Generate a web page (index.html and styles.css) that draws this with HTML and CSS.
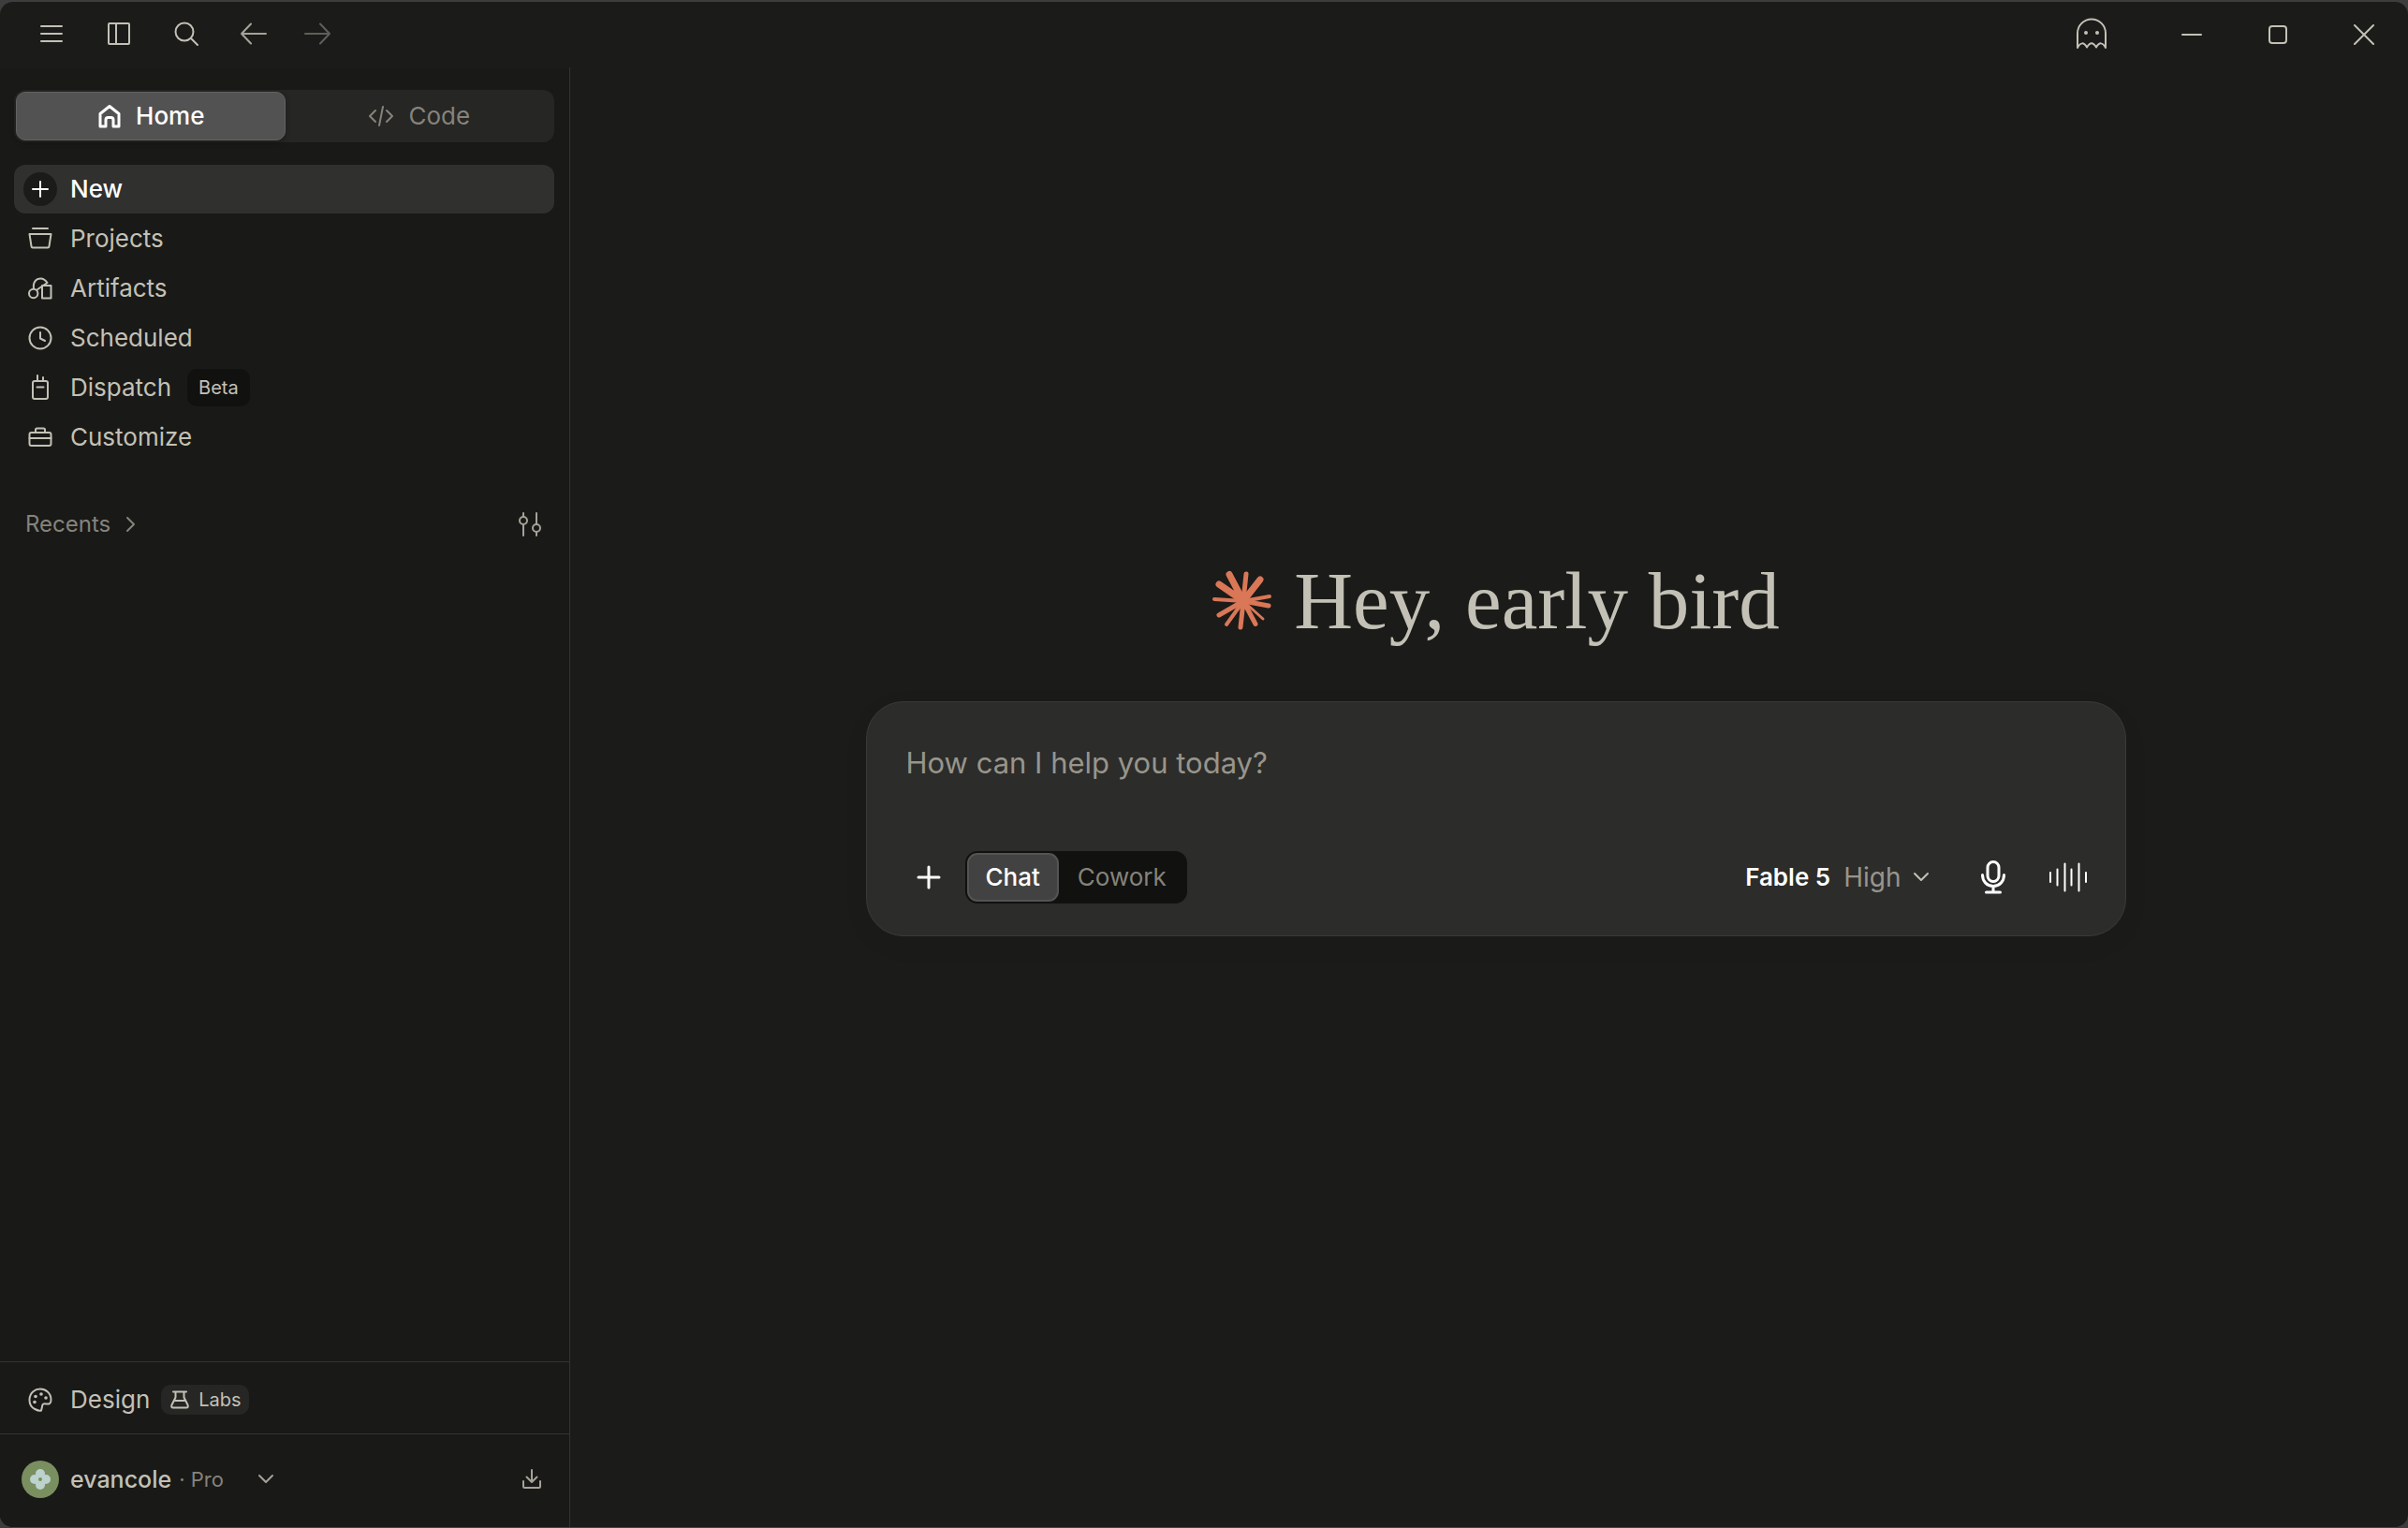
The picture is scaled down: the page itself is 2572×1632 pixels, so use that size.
FILE: index.html
```html
<!DOCTYPE html>
<html lang="en">

	<head>
		<meta charset="utf-8">
		<meta name="viewport" content="width=device-width, initial-scale=1">
		<title>Home</title>
		<link rel="stylesheet" href="styles.css">
	</head>

	<body>
		<div class="desktop">
			<div class="window">
				<header class="titlebar">
					<button class="tool" aria-label="Menu">
						<svg width="28" height="28" viewBox="0 0 28 28"><path d="M3 6h22M3 14h22M3 22h22"/></svg>
					</button>
					<button class="tool" aria-label="Toggle sidebar">
						<svg width="28" height="28" viewBox="0 0 28 28"><rect x="3" y="3" width="22" height="22" rx="1"/><path d="M11 3v22"/></svg>
					</button>
					<button class="tool" aria-label="Search">
						<svg width="28" height="28" viewBox="0 0 28 28"><circle cx="12" cy="12" r="9.500"/><path d="M19 19l7 7"/></svg>
					</button>
					<button class="tool back" aria-label="Back">
						<svg width="28" height="28" viewBox="0 0 28 28"><path d="M27 14H1M11 3.500L1 14l10 10.500"/></svg>
					</button>
					<button class="tool forward" aria-label="Forward">
						<svg width="28" height="28" viewBox="0 0 28 28"><path d="M1 14h26M17 3.500L27 14 17 24.500"/></svg>
					</button>
					<div class="controls">
						<button class="ghost" aria-label="Incognito chat">
							<svg width="36" height="36" viewBox="0 0 36 36"><path d="M3 33V17.500a15 15 0 0 1 30 0V33Q28 24 23 32.500 18 24 13 32.500 8 24 3 33z"/><circle class="dot" cx="12" cy="17" r="2"/><circle class="dot" cx="24" cy="17" r="2"/></svg>
						</button>
						<button class="win" aria-label="Minimize">
							<svg width="24" height="24" viewBox="0 0 24 24"><path d="M2 13h20"/></svg>
						</button>
						<button class="win" aria-label="Maximize">
							<svg width="24" height="24" viewBox="0 0 24 24"><rect x="3" y="4" width="18" height="18" rx="3"/></svg>
						</button>
						<button class="win" aria-label="Close">
							<svg width="24" height="24" viewBox="0 0 24 24"><path d="M2 3l20 20M22 3L2 23"/></svg>
						</button>
					</div>
				</header>

				<div class="body">
					<aside class="sidebar">
						<div class="tabs">
							<button class="tab active">
								<svg width="24" height="26" viewBox="0 0 24 26"><path d="M2 10.500L12 2.500l10 8V24h-6v-7q0-2.500-2.500-2.500h-3Q8 14.500 8 17v7H2z"/></svg>
								Home
							</button>
							<button class="tab">
								<svg width="26" height="26" viewBox="0 0 26 26"><path d="M7 7l-6 6 6 6M19 7l6 6-6 6M15 3l-4 20"/></svg>
								Code
							</button>
						</div>

						<nav class="nav">
							<a class="item active" href="#">
								<span class="icon plus"><svg width="20" height="20" viewBox="0 0 20 20"><path d="M10 2v16M2 10h16"/></svg></span>
								New
							</a>
							<a class="item" href="#">
								<span class="icon"><svg width="26" height="26" viewBox="0 0 26 26"><path d="M5 2h16M1.500 8h23l-2 13q-.2 1.500-1.500 1.500H5Q3.700 22.500 3.500 21z"/></svg></span>
								Projects
							</a>
							<a class="item" href="#">
								<span class="icon"><svg width="26" height="26" viewBox="0 0 26 26"><circle cx="5.700" cy="18.500" r="4.700"/><rect x="15" y="10" width="9.500" height="13.500"/><path d="M6 13Q5 6 10 3.200 16 .5 20.500 7L9.500 14.500"/></svg></span>
								Artifacts
							</a>
							<a class="item" href="#">
								<span class="icon"><svg width="26" height="26" viewBox="0 0 26 26"><circle cx="13" cy="13" r="11.500"/><path d="M13 7v6.500l5 2.500"/></svg></span>
								Scheduled
							</a>
							<a class="item" href="#">
								<span class="icon"><svg width="26" height="28" viewBox="0 0 26 28"><rect x="5" y="7" width="16" height="19" rx="2"/><path d="M10 7V1M16 7V3M9.500 13.500h7"/></svg></span>
								Dispatch
								<span class="badge beta">Beta</span>
							</a>
							<a class="item" href="#">
								<span class="icon"><svg width="26" height="26" viewBox="0 0 26 26"><rect x="1.500" y="8" width="23" height="14" rx="2"/><path d="M1.500 14h23M8 8V5q0-1.500 1.500-1.500h7Q18 3.500 18 5v3"/></svg></span>
								Customize
							</a>
						</nav>

						<div class="recents">
							<button class="recents-label">
								Recents
								<svg width="12" height="20" viewBox="0 0 12 20"><path d="M2 3l7 7-7 7"/></svg>
							</button>
							<button class="filter" aria-label="Filter recents">
								<svg width="28" height="28" viewBox="0 0 28 28"><circle cx="7" cy="10" r="4"/><circle cx="21" cy="18" r="4"/><path d="M7 2v4M7 14v12M21 2v12M21 22v4"/></svg>
							</button>
						</div>

						<div class="bottom">
							<a class="design" href="#">
								<span class="icon"><svg width="26" height="26" viewBox="0 0 26 26"><path d="M14 24.500c-1 .5-13-.5-12.500-12C2 5 7.500 1.500 13 1.500S24.500 5.500 24.500 13c0 4-2 5-5 4.500-3-.5-4.500 0-4.500 3z"/><circle class="dot" cx="8" cy="9.500" r="1.800"/><circle class="dot" cx="14" cy="7" r="1.800"/><circle class="dot" cx="19" cy="11" r="1.800"/><circle class="dot" cx="7" cy="15.500" r="1.800"/></svg></span>
								Design
								<span class="badge labs">
									<svg width="20" height="20" viewBox="0 0 20 20"><path d="M3 1.500h14M5.500 1.500v6l-4 8q-1 3 1.500 3h14q2.500 0 1.500-3l-4-8v-6M4 11h12"/></svg>
									Labs
								</span>
							</a>
							<div class="account">
								<button class="user">
									<svg class="avatar" width="40" height="40" viewBox="0 0 40 40"><circle class="disc" cx="20" cy="20" r="20"/><g class="petals"><circle cx="20" cy="14" r="5"/><circle cx="20" cy="26" r="5"/><circle cx="14" cy="20" r="5"/><circle cx="26" cy="20" r="5"/><rect x="15" y="15" width="10" height="10"/></g><circle class="disc" cx="20" cy="20" r="2"/></svg>
									<span class="name">evancole</span>
									<span class="plan">· Pro</span>
									<svg class="chevron" width="18" height="12" viewBox="0 0 18 12"><path d="M2 2l7 7 7-7"/></svg>
								</button>
								<button class="download" aria-label="Download">
									<svg width="24" height="24" viewBox="0 0 24 24"><path d="M12 2v13M6.500 9.500L12 15l5.500-5.500M3 14v5.500Q3 21 4.500 21h15q1.500 0 1.500-1.500V14"/></svg>
								</button>
							</div>
						</div>
					</aside>

					<main class="main">
						<h1 class="greeting">
							<svg class="spark" width="66" height="66" viewBox="0 0 66 66">
								<path stroke-width="7" d="M34 33L19 4.500M34 33L52 10M34 33L8 15"/>
								<path stroke-width="5" d="M34 33L37 4M34 33L61 38M34 33L47 57.500M34 33L31 61M34 33L8 48"/>
								<path stroke-width="4" d="M34 33L62 28M34 33L16 58M34 33L3 31"/>
								<path stroke-width="3" d="M34 33L55 52"/>
							</svg>
							Hey, early bird
						</h1>

						<form class="composer">
							<textarea class="prompt" rows="1" aria-label="Message" placeholder="How can I help you today?"></textarea>
							<div class="actions">
								<button type="button" class="add" aria-label="Add">
									<svg width="26" height="26" viewBox="0 0 26 26"><path d="M13 2v22M2 13h22"/></svg>
								</button>
								<div class="modes">
									<button type="button" class="mode active">Chat</button>
									<button type="button" class="mode">Cowork</button>
								</div>
								<button type="button" class="model">
									<span class="model-name">Fable 5</span>
									<span class="effort">High</span>
									<svg width="18" height="12" viewBox="0 0 18 12"><path d="M2 2l7 7 7-7"/></svg>
								</button>
								<button type="button" class="voice" aria-label="Dictate">
									<svg width="28" height="36" viewBox="0 0 28 36"><rect x="8" y="1.500" width="12" height="21" rx="6"/><path d="M2.500 15.500c0 7 5 12 11.500 12s11.500-5 11.500-12M14 27.500V34M6.500 34h15"/></svg>
								</button>
								<button type="button" class="voice" aria-label="Voice mode">
									<svg class="wave" width="42" height="36" viewBox="0 0 42 36"><path d="M2 13v10M9.500 9.500v17M17.500 3.500v29M24.500 9.500v17M32.500 3.500v29M40 13v10"/></svg>
								</button>
							</div>
						</form>
					</main>
				</div>
			</div>
		</div>
	</body>

</html>
```
FILE: styles.css
```css
* {
	margin: 0;
	padding: 0;
	box-sizing: border-box;
}
body {
	background: #3d3d3d;
	color: #c3c1b6;
	font-family: Inter, "Liberation Sans", sans-serif;
	font-size: 26px;
	line-height: 36px;
}
button,
textarea {
	font: inherit;
	color: inherit;
	background: none;
	border: 0;
}
button {
	cursor: pointer;
	display: flex;
	align-items: center;
}
a {
	color: inherit;
	text-decoration: none;
}
svg {
	display: block;
	flex: none;
	fill: none;
	stroke: currentColor;
	stroke-width: 2;
	stroke-linecap: round;
	stroke-linejoin: round;
}
svg .dot {
	fill: currentColor;
	stroke: none;
}

.desktop {
	min-height: 100vh;
	padding-top: 2px;
	display: flex;
}
.window {
	flex: 1;
	display: flex;
	flex-direction: column;
	background: #1b1b19;
	border-bottom: 1px solid #444443;
	border-radius: 14px;
	overflow: hidden;
}

/* title bar */
.titlebar {
	height: 70px;
	padding: 0 35px 2px 41px;
	display: flex;
	align-items: center;
	gap: 44px;
}
.back {
	color: #a5a298;
}
.forward {
	margin-left: -4px;
	color: #5f5e59;
}
.controls {
	margin-left: auto;
	display: flex;
	align-items: center;
	gap: 68px;
}
.ghost {
	margin-right: 9px;
}

.body {
	flex: 1;
	display: flex;
}

/* sidebar */
.sidebar {
	width: 609px;
	flex: none;
	display: flex;
	flex-direction: column;
	background: #191917;
	border-right: 1px solid #333331;
}
.tabs {
	margin: 24px 16px 24px 15px;
	height: 56px;
	padding: 2px;
	display: flex;
	background: #262624;
	border-radius: 12px;
}
.tab {
	flex: 1;
	justify-content: center;
	gap: 16px;
	padding-left: 2px;
	color: #85837b;
	border-radius: 10px;
}
.tab.active {
	background: #525252;
	color: #fff;
	font-weight: 500;
	border: 1px solid #626262;
	box-shadow: 0 2px 6px rgba(0, 0, 0, .3);
}
.tab.active svg {
	stroke-width: 3;
}
.nav {
	margin: 0 16px 0 15px;
	display: flex;
	flex-direction: column;
	gap: 1px;
}
.item {
	height: 52px;
	padding-left: 10px;
	display: flex;
	align-items: center;
	border-radius: 12px;
}
.item.active {
	background: #30302e;
	color: #fff;
	font-weight: 500;
}
.icon {
	width: 36px;
	height: 36px;
	margin-right: 14px;
	display: flex;
	align-items: center;
	justify-content: center;
}
.icon.plus {
	background: #1b1b19;
	border-radius: 50%;
}
.badge {
	display: flex;
	align-items: center;
	font-size: 20px;
	border-radius: 10px;
}
.beta {
	height: 40px;
	margin-left: 17px;
	padding: 0 12px;
	background: #111110;
}
.labs {
	height: 32px;
	margin-left: 12px;
	padding: 0 8px 0 10px;
	gap: 10px;
	background: #262624;
}
.recents {
	margin: 41px 28px 0 27px;
	height: 52px;
	display: flex;
	align-items: center;
	justify-content: space-between;
	color: #85837b;
	font-size: 24px;
}
.recents-label {
	gap: 16px;
}
.filter {
	color: #a5a298;
}
.bottom {
	margin-top: auto;
}
.design {
	height: 77px;
	padding: 3px 25px 0;
	display: flex;
	align-items: center;
	border-top: 1px solid #333331;
}
.account {
	height: 100px;
	padding: 0 28px 3px 23px;
	display: flex;
	align-items: center;
	justify-content: space-between;
	border-top: 1px solid #333331;
}
.avatar {
	margin-right: 12px;
	stroke: none;
}
.disc {
	fill: #7a8f60;
}
.petals {
	fill: #bdd2cd;
}
.name {
	font-size: 25px;
	font-weight: 500;
}
.plan {
	margin-left: 8px;
	color: #85837b;
	font-size: 22px;
}
.chevron {
	margin-left: 36px;
	color: #a5a298;
}
.download {
	color: #a5a298;
}

/* main */
.main {
	flex: 1;
	padding: 520px 40px 40px 54px;
	display: flex;
	flex-direction: column;
	align-items: center;
}
.greeting {
	display: flex;
	align-items: center;
	gap: 22px;
	height: 100px;
	font-family: "Liberation Serif", serif;
	font-size: 87px;
	font-weight: 400;
	line-height: 100px;
}
.spark {
	stroke: #d97757;
}
.composer {
	width: 100%;
	max-width: 1346px;
	margin-top: 57px;
	padding: 43px 40px 34px;
	background: #2c2c2a;
	border: 1px solid #3a3a38;
	border-radius: 40px;
	box-shadow: 0 8px 32px rgba(0, 0, 0, .04);
}
.prompt {
	display: block;
	width: 100%;
	height: 44px;
	padding-left: 2px;
	font-size: 31px;
	line-height: 44px;
	resize: none;
	overflow: hidden;
	outline: 0;
}
.prompt::placeholder {
	color: #97958c;
	opacity: 1;
}
.actions {
	margin-top: 72px;
	display: flex;
	align-items: center;
	color: #fff;
}
.actions svg {
	stroke-width: 3;
}
.add {
	padding: 0 13px;
}
.modes {
	height: 56px;
	margin-left: 13px;
	padding: 2px;
	display: flex;
	background: #111110;
	border-radius: 13px;
}
.mode {
	padding: 0 20px;
	color: #85837b;
	border-radius: 11px;
}
.mode.active {
	padding: 0 18px;
	background: #424242;
	border: 2px solid #545454;
	color: #fff;
	font-weight: 500;
}
.model {
	margin-left: auto;
	margin-right: 54px;
}
.model-name {
	font-weight: 600;
}
.effort {
	margin: 0 12px 0 14px;
	color: #97958c;
	font-size: 28px;
}
.model svg {
	stroke: #c3c1b6;
	stroke-width: 2;
}
.voice + .voice {
	margin-left: 45px;
}
.actions .wave {
	stroke-width: 2;
}
```
